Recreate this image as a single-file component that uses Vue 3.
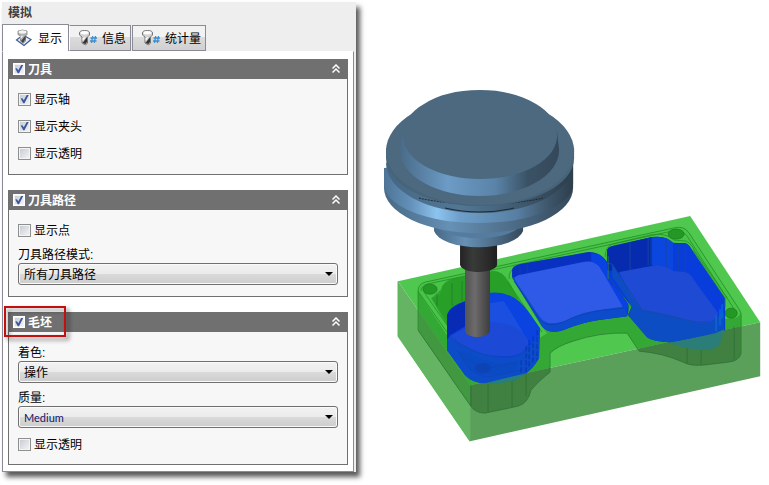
<script setup>
import { reactive, ref } from 'vue'

const tabs = [
  { id: 'display', label: '显示' },
  { id: 'info', label: '信息' },
  { id: 'stats', label: '统计量' },
]
const activeTab = ref('display')

const state = reactive({
  tool: true,
  shaft: true,
  holder: true,
  toolTransparent: false,
  toolpath: true,
  points: false,
  mode: '所有刀具路径',
  stock: true,
  shading: '操作',
  quality: 'Medium',
  stockTransparent: false,
})

const toolOptions = [
  { key: 'shaft', label: '显示轴' },
  { key: 'holder', label: '显示夹头' },
  { key: 'toolTransparent', label: '显示透明' },
]
</script>

<template>
  <main class="page">
    <section class="dialog">
      <h1 class="title">模拟</h1>
      <div class="tabs" role="tablist">
        <button
          v-for="tab in tabs"
          :key="tab.id"
          type="button"
          role="tab"
          class="tab"
          :class="{ active: tab.id === activeTab }"
          :aria-selected="tab.id === activeTab"
          @click="activeTab = tab.id"
        >
          <svg class="tab-icon" viewBox="0 0 18 18" aria-hidden="true">
            <template v-if="tab.id === 'display'">
              <path d="M1.500 11L8 6L16 10.500L9 16.500Z" fill="#e8eef8" stroke="#3c5c92" stroke-width="1.2" />
              <path d="M3 2Q7.500 0 12 2V5.500L10.500 7V12L8 14.500L5.500 12V7L3 5.500Z" fill="#b0b0b0" stroke="#7c7c7c" stroke-width=".8" />
              <ellipse cx="7.500" cy="3" rx="4" ry="1.700" fill="#f4f4f4" />
              <path d="M6 12L10.500 6.500V10L8 14Z" fill="#444" />
              <path d="M5.500 7L8.500 6.500L5.500 10Z" fill="#eee" />
            </template>
            <template v-else>
              <path d="M.5 4Q.5 1.500 5.500 1.500T10.500 4V6L8.500 8V14L6.500 16L3 14V8L.5 6Z" fill="#d2d2d2" stroke="#777" />
              <ellipse cx="5.500" cy="3.700" rx="4" ry="1.700" fill="#fff" />
              <path d="M3.500 14L8 8V13L6.500 15Z" fill="#333" />
              <path d="M3.500 9L6.500 8L3.500 12Z" fill="#fff" />
              <path d="M13.700 7L12.500 14M16.500 7L15.300 14M11.500 9H18M11 12H17.500" fill="none" stroke="#3e8ed0" stroke-width="1.300" />
            </template>
          </svg>
          <span>{{ tab.label }}</span>
        </button>
      </div>

      <div class="tab-page">
        <section class="group">
          <header class="group-head">
            <label class="check head-check"><input v-model="state.tool" type="checkbox" /><span>刀具</span></label>
            <svg class="chevrons" viewBox="0 0 8 10" aria-hidden="true"><path d="M.5 4.500L4 1L7.500 4.500M.5 8.500L4 5L7.500 8.500" /></svg>
          </header>
          <div class="group-body options">
            <label v-for="o in toolOptions" :key="o.key" class="check">
              <input v-model="state[o.key]" type="checkbox" /><span>{{ o.label }}</span>
            </label>
          </div>
        </section>

        <section class="group">
          <header class="group-head">
            <label class="check head-check"><input v-model="state.toolpath" type="checkbox" /><span>刀具路径</span></label>
            <svg class="chevrons" viewBox="0 0 8 10" aria-hidden="true"><path d="M.5 4.500L4 1L7.500 4.500M.5 8.500L4 5L7.500 8.500" /></svg>
          </header>
          <div class="group-body path-body">
            <label class="check"><input v-model="state.points" type="checkbox" /><span>显示点</span></label>
            <div class="field">
              <label for="mode">刀具路径模式:</label>
              <div class="drop">
                <select id="mode" v-model="state.mode"><option>所有刀具路径</option></select>
              </div>
            </div>
          </div>
        </section>

        <section class="group">
          <header class="group-head">
            <label class="check head-check"><input v-model="state.stock" type="checkbox" /><span>毛坯</span></label>
            <svg class="chevrons" viewBox="0 0 8 10" aria-hidden="true"><path d="M.5 4.500L4 1L7.500 4.500M.5 8.500L4 5L7.500 8.500" /></svg>
            <span class="callout"></span>
          </header>
          <div class="group-body stock-body">
            <div class="field">
              <label for="shading">着色:</label>
              <div class="drop">
                <select id="shading" v-model="state.shading"><option>操作</option></select>
              </div>
            </div>
            <div class="field">
              <label for="quality">质量:</label>
              <div class="drop">
                <select id="quality" v-model="state.quality" class="latin"><option>Medium</option></select>
              </div>
            </div>
            <label class="check"><input v-model="state.stockTransparent" type="checkbox" /><span>显示透明</span></label>
          </div>
        </section>
      </div>
    </section>

    <svg class="scene" viewBox="370 0 399 485" aria-hidden="true">
      <defs>
        <linearGradient id="cap" x1="0" x2="1">
          <stop offset="0" stop-color="#496b88" /><stop offset=".3" stop-color="#6c9bc5" />
          <stop offset=".6" stop-color="#5a83a8" /><stop offset=".8" stop-color="#3b5265" /><stop offset="1" stop-color="#34485a" />
        </linearGradient>
        <linearGradient id="flange" x1="0" x2="1">
          <stop offset="0" stop-color="#4e7496" /><stop offset=".14" stop-color="#6390b8" /><stop offset=".28" stop-color="#8cc4ef" />
          <stop offset=".4" stop-color="#6e9fca" /><stop offset=".7" stop-color="#587fa3" />
          <stop offset=".86" stop-color="#3f586d" /><stop offset="1" stop-color="#2d3e4c" />
        </linearGradient>
        <linearGradient id="groove" x1="0" x2="1">
          <stop offset="0" stop-color="#466783" /><stop offset=".4" stop-color="#527796" />
          <stop offset=".75" stop-color="#3d566b" /><stop offset="1" stop-color="#2d3d4a" />
        </linearGradient>
        <linearGradient id="hub" x1="0" x2="1">
          <stop offset="0" stop-color="#476985" /><stop offset=".35" stop-color="#6690b5" /><stop offset="1" stop-color="#35495b" />
        </linearGradient>
        <linearGradient id="shank" x1="0" x2="1">
          <stop offset="0" stop-color="#555" /><stop offset=".4" stop-color="#6c6a6a" /><stop offset="1" stop-color="#3d3d3d" />
        </linearGradient>
        <linearGradient id="collar" x1="0" x2="1">
          <stop offset="0" stop-color="#222" /><stop offset=".35" stop-color="#393b39" /><stop offset="1" stop-color="#202020" />
        </linearGradient>
        <clipPath id="above"><path d="M380 200H769V320L470 385L398 281Z" /></clipPath>
        <clipPath id="below"><path d="M398 281L470 385L769 320V460H380Z" /></clipPath>
      </defs>

      <!-- stock block -->
      <path d="M398 281L690 216L760 322L470 385Z" fill="#50c850" />
      <path d="M398 281L470 385V441L398 336Z" fill="#64b464" />
      <path d="M470 385L760 322V376L470 441Z" fill="#5a9f5a" />
      <path d="M398 281V336L470 441" fill="none" stroke="#55b955" />

      <!-- part body seen through the stock -->
      <path clip-path="url(#above)" fill="#34a834" d="M418 291Q418 284 425 282L673 228Q684 225 689 233L737 306Q741 311 741 317V353Q739 361 728 362L703 365Q690 366 683 362Q663 353 639 351L627 333Q600 332 573 341Q557 346 550 353V372Q538 381 531 390Q528 403 518 406L485 413Q475 413 470 405L418 330Z" />
      <path clip-path="url(#below)" fill="#408040" d="M418 291L470 360L550 345V372Q538 381 531 390Q528 403 518 406L485 413Q475 413 470 405L418 330ZM639 351L627 320L741 300V353Q739 361 728 362L703 365Q690 366 683 362Q663 353 639 351Z" />
      <path fill="#42a342" d="M418 309L470 385V405L418 330Z" opacity=".7" />

      <!-- upper rim -->
      <path fill="#48c448" d="M418 291Q418 284 425 282L673 228Q684 225 689 233L737 306Q743 314 737 317L724 319V297L691 248Q687 244 673 242Q665 236 652 237L613 245Q604 249 607 264Q600 252 590 252L520 264Q512 266 512 278L541 326L547 333L539 338L511 285Q503 271 493 271L450 279Q443 282 441 289L431 298L447 325V335Z" />
      <path fill="#28a028" d="M432 298Q443 294 442 286Q446 281 454 278L494 271Q504 272 507 281L539 331L530 337L520 300L500 293L488 293L465 301Q449 306 447 323Z" />
      <path fill="none" stroke="#248f24" stroke-width=".8" d="M418 330V291Q418 284 425 282L673 228Q684 225 689 233L737 306Q742 313 741 317V353M421 291Q421 286 427 284L672 231Q682 229 687 236L734 309M418 291L447 332M424 292L447 325M509 279Q508 269 519 266M605 257Q605 247 612 244L650 235Q665 232 674 240L686 241Q692 244 694 250L727 298M507 281L542 332" />
      <g fill="none" stroke="#236c30" stroke-width=".8" opacity=".75">
        <path d="M418 330L470 405Q475 413 485 413L518 406Q528 403 531 390Q538 381 550 372V353Q557 346 573 341Q600 332 627 333L639 351Q663 353 683 362Q690 366 703 365L728 362Q739 361 741 353" />
        <path d="M471 386V406M488 383V412M512 378V407M526 373V396M687 346V363M701 350V365M734 326V359M437 294V306M452 283V306M462 281V301" />
      </g>
      <g fill="#249824" stroke="#1e7d20" stroke-width=".8">
        <ellipse cx="430" cy="289" rx="7" ry="5" /><ellipse cx="676" cy="234" rx="8" ry="5" /><ellipse cx="731" cy="313" rx="6" ry="5" />
      </g>

      <!-- left pocket -->
      <path fill="#0a43df" d="M447 315Q449 306 465 301L488 293Q500 291 511 296Q519 299 528 311L540 328L539 358Q532 370 524 374L485 383Q473 383 465 375L447 350Z" />
      <path fill="#082bb5" d="M447 315Q449 307 465 301V326L450 335L447 340Z" />
      <path fill="#1a4fe0" d="M488 303L504 301L529 342L525 350L488 327Z" />
      <path fill="#0c4cc8" d="M447 339L463 329Q496 372 526 350L539 335V358Q532 370 524 374L485 383Q473 383 465 375L447 350Z" />
      <path fill="#1c49d5" d="M450 336Q473 322 495 322Q525 325 528 345Q525 354 509 356Q487 357 470 348Q456 342 450 336Z" />
      <path fill="#0a4bc1" d="M467 351Q482 363 503 363L519 361L514 371L487 375Q475 375 467 366L456 350L463 352L472 362" opacity=".75" />
      <path d="M450 336Q480 363 520 355L528 345M454 337L467 356Q474 366 487 368L516 363M460 352Q468 376 488 377L520 370" fill="none" stroke="#1540a8" stroke-width=".7" opacity=".6" />
      <ellipse cx="483" cy="368" rx="8" ry="5" fill="#0d43b4" />
      <path d="M526 346V372M529 340V368M533 336V364M537 330V360M521 360V374" stroke="#0632b4" stroke-dasharray="5 2" />
      <path d="M480 383Q494 386 518 379L526 373L485 383Z" fill="#257f7b" />

      <!-- middle pocket -->
      <path fill="#0831c2" d="M512 277V270Q512 266 520 264L588 252Q601 252 607 262V276L627 302Q630 306 627 316L597 320Q584 322 568 328Q550 336 542 326Z" />
      <path fill="#0c4ccc" d="M512 277L542 326Q550 336 568 328Q584 322 597 320L627 316V308L515 277Z" />
      <path fill="#2f5ae8" d="M515 280Q513 277 519 275L583 262Q594 260 599 266L626 306L604 309Q584 311 569 319Q548 328 540 317Z" />
      <path fill="none" stroke="#123fae" stroke-width=".8" d="M514 281L540 320Q547 328 563 322Q579 313 604 310L626 308M520 266V275M527 264V273" />
      <path d="M591 253Q602 253 607 263V275L628 304L627 314L599 266L591 261Z" fill="#0842e2" />

      <!-- right pocket -->
      <path fill="#083ddb" d="M607 279V253Q606 247 613 246L652 237Q666 235 673 243L685 243Q689 244 692 250L725 298V330L715 334L670 342Q650 341 646 336L628 315L632 306Z" />
      <path fill="#072bae" d="M607 270V253Q606 247 613 246L652 237V266L620 273Z" />
      <path fill="#0b46df" d="M652 237Q666 235 673 243V271L657 265H652Z" />
      <path fill="#0c4dc4" d="M612 264L642 310Q660 313 683 319Q695 323 708 322L724 312V330L715 334L670 342Q650 341 646 336L628 315L632 306L612 276Z" />
      <path fill="#1e4ad4" d="M619 272L657 265Q668 267 673 271L685 272Q690 273 694 280L718 313Q715 323 700 323Q692 322 683 319Q660 313 642 310L632 297Z" />
      <path fill="none" stroke="#1748a4" stroke-width=".9" d="M607 263L612 264L642 310Q660 313 683 319Q695 323 708 322M607 275L632 307L628 315M630 243V270M648 238V265M666 238V267M678 243V271M685 243V272M651 238V265" />
      <path fill="#2b7d78" d="M669 343L715 333L724 329L720 343Q716 350 702 350Q687 349 669 343Z" />
      <path fill="none" stroke="#0870e0" stroke-width="2" opacity=".6" d="M720 309V325M716 315V331M722 304V318" />
      <path fill="none" stroke="#2e8a3c" stroke-width=".8" d="M608 256V279M693 250L725 298V307" />

      <!-- holder and cutter -->
      <path d="M465 265H490V331Q488 336 477 337Q466 336 465 331Z" fill="url(#shank)" />
      <path d="M460 245H497V265Q495 271 479 272Q463 272 460 265Z" fill="url(#collar)" />
      <path d="M434 225V231A45 19 0 0 0 523 231V225Z" fill="url(#hub)" />
      <path d="M434 222A45 19 0 0 0 523 222Z" fill="#557c9f" />
      <path d="M384 168V188A94.500 45 0 0 0 573 188V160Z" fill="url(#hub)" />
      <path d="M384 168V184A94.500 39 0 0 0 573 184V162Z" fill="url(#flange)" />
      <path d="M386 163A93.500 50 0 0 0 573 163Z" fill="url(#groove)" />
      <path d="M419 198A108 34 0 0 0 543 198" fill="none" stroke="#202a33" stroke-dasharray="2 1" />
      <path d="M445 208Q479 216 514 208" fill="none" stroke="#202a33" />
      <path d="M386 148V158A94 48 0 0 0 574 158V148Z" fill="#476479" />
      <ellipse cx="480" cy="151" rx="94" ry="54" fill="#4c6980" />
      <path d="M403 132L400 150A79.500 46 0 0 0 559 150L557 132Z" fill="url(#cap)" />
      <path d="M480 90C456 90 438 95 424 104C410 112 403 122 403 136A77 43 0 0 0 557 136C557 121 549 112 536 104C521 95 503 90 480 90Z" fill="#4c6980" />
    </svg>
  </main>
</template>

<style>
body {
  margin: 0;
  background: #fff;
}
</style>

<style scoped>
.page {
  display: flex;
  align-items: flex-start;
  gap: 14px;
  padding-left: 2px;
  font-family: "Liberation Sans", "Noto Sans CJK SC", sans-serif;
  font-size: 12px;
  line-height: 16px;
  color: #000;
}

.dialog {
  flex: 0 0 calc(46% + 1px);
  box-sizing: border-box;
  margin-top: 2px;
  background: #eee;
  box-shadow: 4px 5px 5px rgba(0, 0, 0, 0.65);
}

.title {
  margin: 0;
  padding: 3px 6px;
  font-size: 12px;
  line-height: 16px;
  color: #404040;
}

.tabs {
  display: flex;
  align-items: flex-end;
  height: 27px;
}

.tab {
  display: flex;
  align-items: center;
  gap: 5px;
  height: 26px;
  padding: 0 4px 0 9px;
  border: 1px solid #8b8b98;
  border-left-color: #fff;
  box-sizing: border-box;
  background: linear-gradient(#f2f2f2 45%, #dcdcdc 45%, #d0d0d0);
  font: inherit;
  color: #000;
}

.tab + .tab + .tab {
  margin-left: 1px;
  border-left-color: #8b8b98;
}

.tab.active {
  height: 27px;
  padding: 0 6px 0 12px;
  border-bottom: 0;
  border-left-color: #8b8b98;
  background: #fff;
}

.tab-icon {
  width: 18px;
  height: 18px;
}

.tab span,
.check span {
  padding-top: 2px;
  line-height: 14px;
}

.tab-page {
  display: flex;
  flex-direction: column;
  gap: 15px;
  margin-right: 2px;
  padding: 7px 5px 6px;
  border: 1px solid #8b8b98;
  border-top-color: #fff;
  background: #fff;
}

.group {
  border: 1px solid #707070;
  border-top: 0;
  background: #f7f7f7;
}

.group-head {
  position: relative;
  display: flex;
  align-items: center;
  justify-content: space-between;
  height: 20px;
  padding: 0 7px 0 4px;
  background: #707070;
  color: #fff;
  font-weight: bold;
}

.chevrons {
  width: 8px;
  height: 10px;
  fill: none;
  stroke: #fff;
  stroke-width: 1.5;
}

.group-body {
  display: flex;
  flex-direction: column;
  padding: 12px 9px;
}

.options {
  gap: 11px;
  padding-bottom: 13px;
}

.path-body {
  gap: 7px;
  padding-bottom: 11px;
}

.stock-body {
  gap: 5px;
  padding-top: 11px;
}

.stock-body > .check {
  padding-top: 3px;
}

.check {
  display: flex;
  align-items: center;
  gap: 3px;
  align-self: flex-start;
}

.head-check {
  align-self: center;
}

.check input {
  appearance: none;
  display: grid;
  place-items: center;
  width: 13px;
  height: 13px;
  margin: 0;
  box-sizing: border-box;
  border: 1px solid #8e8f8f;
  outline: 1px solid #f4f4f4;
  outline-offset: -2px;
  background: linear-gradient(135deg, #c4c9d0, #f6f6f6);
}

.head-check input {
  width: 12px;
  height: 12px;
  border-color: #fff;
}

.check input:checked::after {
  content: "";
  width: 9px;
  height: 9px;
  background: #3b57a0;
  clip-path: polygon(8% 45%, 28% 42%, 42% 65%, 76% 4%, 98% 4%, 50% 98%, 36% 98%);
}

.field {
  display: flex;
  flex-direction: column;
}

.field label {
  padding-top: 2px;
  line-height: 16px;
}

.drop {
  position: relative;
  display: grid;
}

.drop::after {
  content: "";
  position: absolute;
  right: 5px;
  top: 9px;
  border: 4px solid transparent;
  border-top-color: #000;
  border-bottom: 0;
  pointer-events: none;
}

select {
  appearance: none;
  height: 22px;
  padding: 1px 20px 0 5px;
  border: 1px solid #707070;
  border-radius: 3px;
  box-shadow: inset 0 0 0 1px #fafafa;
  background: linear-gradient(#f2f2f2, #ebebeb 48%, #dadada 50%, #cdcdcd);
  font: inherit;
  color: #000;
}

select.latin {
  font-family: Lato, sans-serif;
  font-size: 11px;
  color: #15156b;
}

.callout {
  position: absolute;
  left: -5px;
  top: -6px;
  width: 58px;
  height: 27px;
  border: 2px solid #c01010;
  filter: drop-shadow(3px 3px 2px rgba(0, 0, 0, 0.5));
  pointer-events: none;
}

.scene {
  flex: 1;
  min-width: 0;
  height: auto;
}
</style>
